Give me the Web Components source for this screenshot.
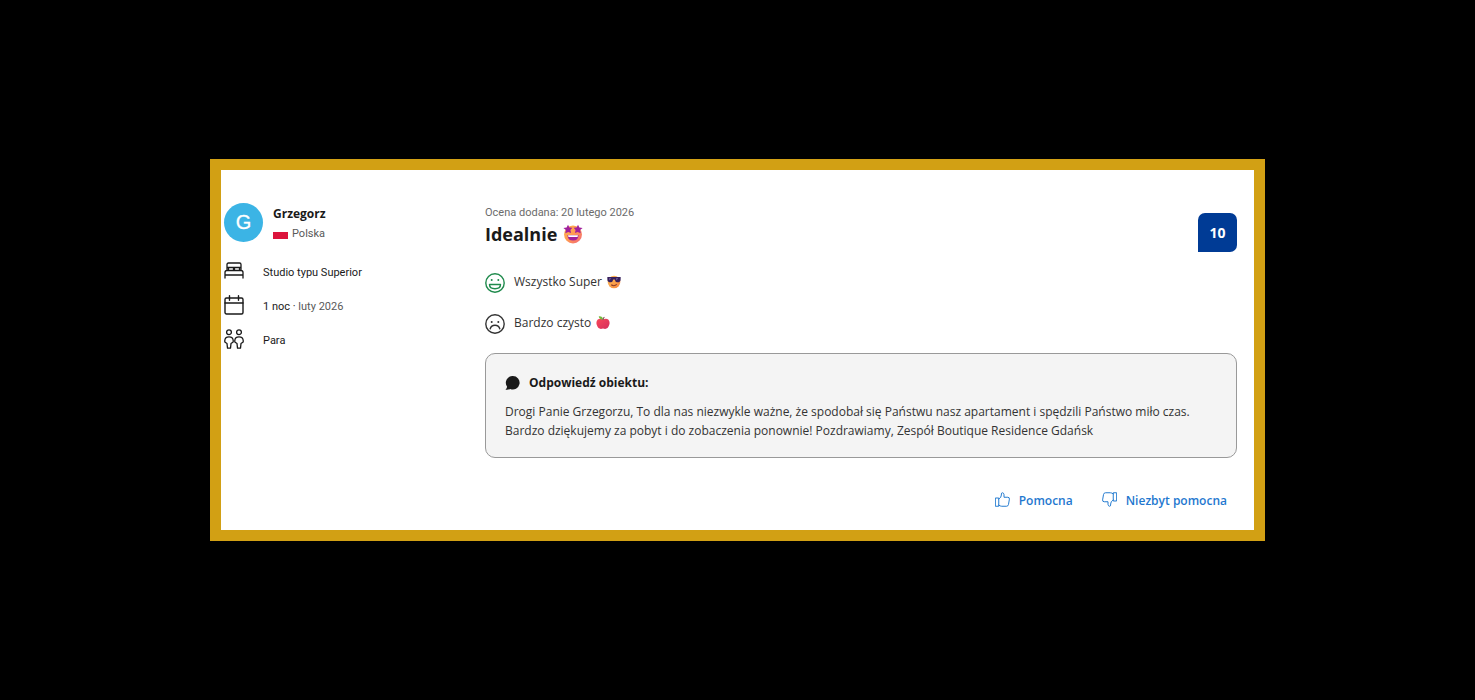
<!DOCTYPE html>
<html lang="pl">
<head>
<meta charset="utf-8">
<meta name="viewport" content="width=device-width, initial-scale=1">
<title>Opinia gościa</title>
<style>
body { margin: 0; background: #000; font-family: "Open Sans", "Noto Sans", sans-serif; font-size: 12px; color: #1a1a1a; --small: 11px Roboto, "Noto Sans", sans-serif; }
</style>
</head>
<body>
<review-page>
  <review-card>
    <guest-profile slot="guest" initial="G">
      <span slot="name">Grzegorz</span>
      <span slot="country">Polska</span>
      <guest-fact icon="bed">Studio typu Superior</guest-fact>
      <guest-fact icon="calendar">1 noc · <span slot="note">luty 2026</span></guest-fact>
      <guest-fact icon="pair">Para</guest-fact>
    </guest-profile>
    <review-header score="10">
      <span slot="date">Ocena dodana: 20 lutego 2026</span>
      <span slot="title">Idealnie</span>
      <ui-icon slot="emoji" name="starstruck" size="20" label="🤩"></ui-icon>
    </review-header>
    <review-points>
      <review-point icon="smile">Wszystko Super <ui-icon slot="emoji" name="cool" size="14" label="😎"></ui-icon></review-point>
      <review-point icon="frown">Bardzo czysto <ui-icon slot="emoji" name="apple" size="14" label="🍎"></ui-icon></review-point>
    </review-points>
    <host-reply>
      <span slot="heading">Odpowiedź obiektu:</span>
      Drogi Panie Grzegorzu, To dla nas niezwykle ważne, że spodobał się Państwu nasz apartament i spędzili Państwo miło czas.<br>Bardzo dziękujemy za pobyt i do zobaczenia ponownie! Pozdrawiamy, Zespół Boutique Residence Gdańsk
    </host-reply>
    <review-votes>
      <vote-button icon="up">Pomocna</vote-button>
      <vote-button icon="down">Niezbyt pomocna</vote-button>
    </review-votes>
  </review-card>
</review-page>
<script>
const line = 'fill="none" stroke="currentColor" stroke-linecap="round" stroke-linejoin="round"';
const icons = {
  bed: `<g ${line} stroke-width="1.3"><path d="M3 9.500V3.500Q3 2 4.500 2h11Q17 2 17 3.500v6M1 17v-5.500Q1 9.500 3 9.500h14Q19 9.500 19 11.500V17M1 14h18M4.500 9.500V6.500h5v3M10.500 9.500V6.500h5v3M3 6.500h14"/></g>`,
  calendar: `<g ${line} stroke-width="1.4"><rect x="1" y="3" width="18" height="16" rx="1.500"/><path d="M1 8h18M5.500 .8v4.400M14.500 .8v4.400"/></g>`,
  pair: `<g ${line} stroke-width="1.3"><circle cx="5" cy="3.200" r="2.400"/><circle cx="15" cy="3.200" r="2.400"/><path d="M3 14.500L.8 13V11.500Q1 7.800 5 7.800t4.200 3.700V13L7 14.500l-.5 4.700h-3zM13 14.500L10.800 13v-1.500Q11 7.800 15 7.800t4.200 3.700V13L17 14.500l-.5 4.700h-3z"/></g>`,
  smile: `<g ${line} stroke-width="1.4"><circle cx="10" cy="10" r="9.200"/><path d="M4.500 11.500h11q0 4.200-5.500 4.200t-5.500-4.200z"/></g><circle cx="6.700" cy="7" r="1" fill="currentColor"/><circle cx="13.300" cy="7" r="1" fill="currentColor"/>`,
  frown: `<g ${line} stroke-width="1.4"><circle cx="10" cy="10" r="9.200"/><path d="M5.200 14.800q1-3.500 4.800-3.500t4.800 3.500"/></g><circle cx="6.700" cy="8" r="1" fill="currentColor"/><circle cx="13.300" cy="8" r="1" fill="currentColor"/>`,
  bubble: `<path fill="currentColor" d="M10.500 0a9 9 0 1 1-3.500 17.300Q3.500 19 .6 18.200q2-1.700 2.200-4A9 9 0 0 1 10.500 0z"/>`,
  up: `<g ${line} stroke-width="1.3"><path d="M1 8h4v11H1zM5 9.500Q8.500 7.500 8.500 4V2.500Q8.500 1 10 1t2 2.500V7h5q2.500 0 2.200 2.500l-1.200 7q-.4 2.500-2.700 2.500H9q-2 0-4-1.500"/></g>`,
  down: `<g ${line} stroke-width="1.3"><path d="M19 12h-4V1h4zM15 10.500q-3.500 2-3.500 5.500v1.500q0 1.500-1.500 1.500t-2-2.500V13H3Q.5 13 .8 10.500l1.200-7Q2.400 1 4.700 1H11q2 0 4 1.500"/></g>`,
  starstruck: `<defs><linearGradient id="s" x2="1" y2="1"><stop offset="0" stop-color="#ffb64d"/><stop offset=".5" stop-color="#ff9a52"/><stop offset="1" stop-color="#f2607a"/></linearGradient></defs><circle cx="10" cy="10.500" r="9" fill="url(#s)"/><path fill="#a0209b" d="M5 .8l1.400 2.700 3 .3-2 2.300.7 3L5.300 8 2.300 9.300l.6-3.200L.4 3.900l3.200-.4zM15 .8l1.400 2.700 3.200.4-2.500 2.200.6 3.200L14.700 8l-2.800 1.100.7-3-2-2.300 3-.3zM4.500 11h11q0 5.500-5.500 5.500T4.500 11z"/><path fill="#fff" d="M5 11.200h10l-.5 1.800h-9z"/>`,
  cool: `<defs><linearGradient id="c" x2="1" y2="1"><stop offset="0" stop-color="#ffc35a"/><stop offset="1" stop-color="#f58340"/></linearGradient></defs><circle cx="10" cy="10" r="9" fill="url(#c)"/><path fill="#37205c" d="M.5 3h19v3q0 4.500-4.500 4.500-3.200 0-4-4H9q-.8 4-4 4Q.5 10.500 .5 6z"/><path fill="#7a68ab" d="M3 4.500h3l-2.500 3zM13 4.500h3l-2.500 3z"/><path d="M6 14q4 2.800 8-.5" fill="none" stroke="#8c3c2a" stroke-width="1.500"/>`,
  apple: `<defs><linearGradient id="a" x2="1" y2="1"><stop offset="0" stop-color="#f8485a"/><stop offset="1" stop-color="#d52d5b"/></linearGradient></defs><path fill="url(#a)" d="M10 5q4.500-2.500 7.500 0 3 3 1.300 8Q17 18.500 13 18.500q-1.500 0-3-.5-1.500.5-3 .5-4 0-5.800-5.500-1.700-5 1.300-8 3-2.500 7.500 0z"/><path fill="#76b93f" d="M9.500 5.200Q4 4.700 4 .5q5.500-.5 6 4.700z"/><path fill="none" stroke="#754548" stroke-width="1.500" d="M10 5.700q0-3 2-4"/>`
};

class Base extends HTMLElement {
  connectedCallback() {
    if (!this.shadowRoot) this.attachShadow({ mode: 'open' }).innerHTML = this.view();
  }
}
const define = (name, view) => customElements.define(name, class extends Base { view() { return view(this); } });

define('ui-icon', el => {
  const size = el.getAttribute('size') || 20, label = el.getAttribute('label');
  return `<style>:host{display:block;flex:none;width:${size}px;height:${size}px}svg{display:block;width:100%;height:100%}</style>
  <svg viewBox="0 0 20 20" ${label ? `role="img" aria-label="${label}"` : 'aria-hidden="true"'}>${icons[el.getAttribute('name')]}</svg>`;
});

define('review-page', () => `<style>:host{display:flex;align-items:center;min-height:100vh;padding:0 210px;box-sizing:border-box}::slotted(*){flex:1;min-width:0}
@media(max-width:1000px){:host{padding:0 20px}}</style><slot></slot>`);

define('review-card', () => `<style>
:host{display:block;background:#fff;border:11px solid #d2a014}
article{display:grid;grid-template-columns:261px minmax(0,1fr);padding:33px 17px 18px 3px}
@media(max-width:800px){article{grid-template-columns:minmax(0,1fr);gap:20px}}
</style><article><slot name="guest"></slot><div><slot></slot></div></article>`);

define('guest-profile', el => `<style>
:host{display:block}
header{display:flex;gap:10px;margin-bottom:12px}
.avatar{display:grid;place-items:center;width:39px;height:39px;border-radius:50%;background:#3bb4e5;color:#fff;font:20px/39px "Liberation Sans",sans-serif;-webkit-text-stroke:.3px #fff}
.name{font-weight:700;font-size:12px;line-height:22px}
.country{display:flex;align-items:center;gap:4px;font:var(--small);line-height:17px;color:#595959}
.flag{width:15px;height:11px;background:linear-gradient(#fff 4px,#dc143c 4px)}
</style><header><div class="avatar">${el.getAttribute('initial')}</div><div><div class="name"><slot name="name"></slot></div>
<div class="country"><span class="flag"></span><slot name="country"></slot></div></div></header><slot></slot>`);

define('guest-fact', el => `<style>
:host{display:flex;align-items:center;gap:19px;height:34px;font:var(--small)}
span{padding-top:3px}
::slotted([slot=note]){color:#595959}
</style><ui-icon name="${el.getAttribute('icon')}"></ui-icon><span><slot></slot><slot name="note"></slot></span>`);

define('review-header', el => `<style>
:host{display:flex;justify-content:space-between}
.date{font:var(--small);line-height:20px;color:#6b6b6b}
h2{display:flex;align-items:center;gap:6px;margin:0;font-size:18px;line-height:22px;font-weight:700}
.score{display:grid;place-items:center;width:39px;height:39px;margin-top:10px;border-radius:7px 7px 7px 0;background:#003b95;color:#fff;font-size:14px;font-weight:700}
</style><div><div class="date"><slot name="date"></slot></div><h2><slot name="title"></slot><slot name="emoji"></slot></h2></div><div class="score">${el.getAttribute('score')}</div>`);

define('review-points', () => `<style>:host{display:grid;gap:21px;margin:21px 0 19px}</style><slot></slot>`);

define('review-point', el => `<style>
:host{display:flex;gap:9px;height:20px;line-height:17px;color:#333}
.mark{color:${el.getAttribute('icon') === 'smile' ? '#1f8a4c' : '#333'}}
p{display:flex;align-items:center;gap:5px;height:17px;margin:0}
</style><ui-icon class="mark" name="${el.getAttribute('icon')}"></ui-icon><p><span><slot></slot></span><slot name="emoji"></slot></p>`);

define('host-reply', () => `<style>
:host{display:block;padding:19px 19px 17px;border:1px solid #999;border-radius:10px;background:#f4f4f4}
h3{display:flex;align-items:center;gap:9px;margin:0 0 9px;font-size:12px;line-height:20px;font-weight:700}
p{margin:0;line-height:19px;color:#333}
</style><h3><ui-icon name="bubble" size="15"></ui-icon><slot name="heading"></slot></h3><p><slot></slot></p>`);

define('review-votes', () => `<style>:host{display:flex;justify-content:flex-end;gap:29px;margin-top:32px;padding-right:10px}</style><slot></slot>`);

define('vote-button', el => `<style>
:host{display:block}
button{display:flex;align-items:flex-start;gap:9px;height:22px;padding:0;border:0;background:none;color:#1f78cf;font:600 12px/22px "Open Sans","Noto Sans",sans-serif;cursor:pointer}
ui-icon{margin-top:2px}
</style><button type="button"><ui-icon name="${el.getAttribute('icon')}" size="15"></ui-icon><span><slot></slot></span></button>`);
</script>
</body>
</html>
